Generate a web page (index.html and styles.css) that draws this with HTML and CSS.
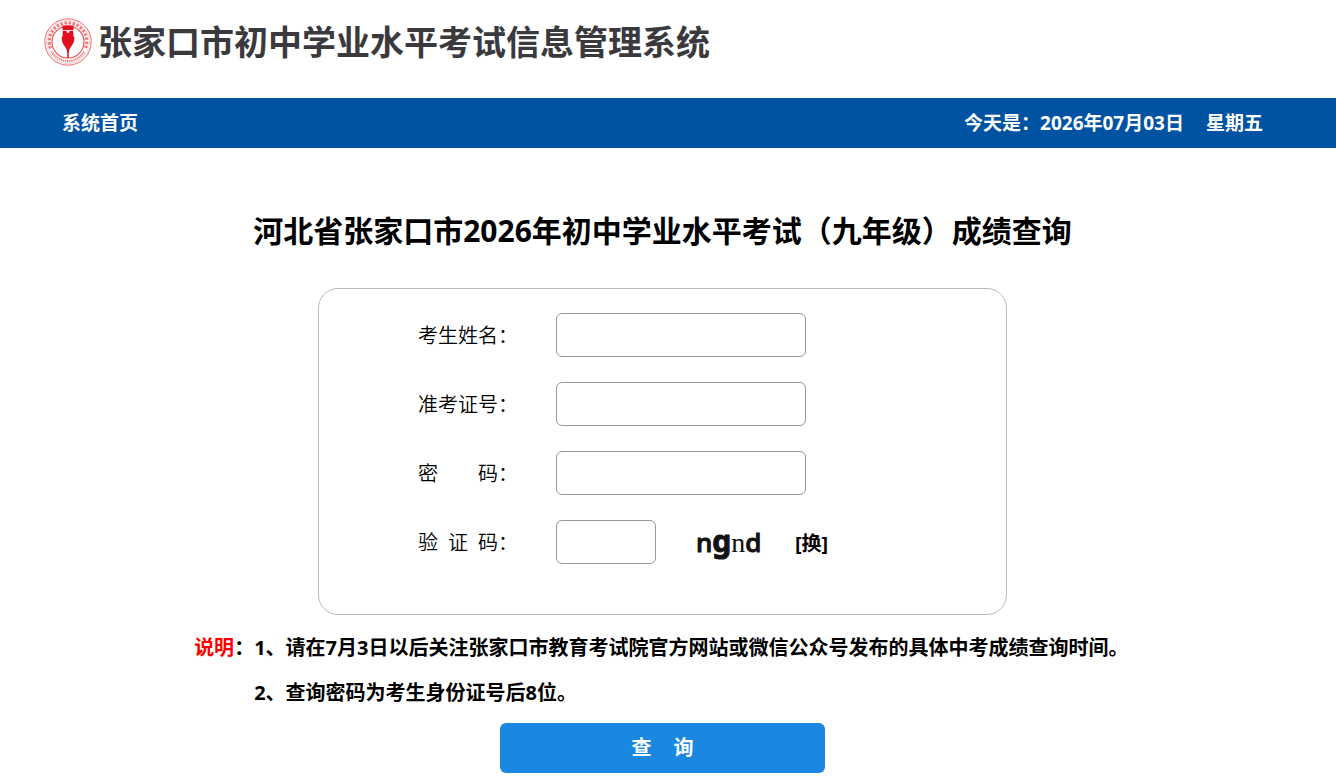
FILE: index.html
```
<!DOCTYPE html>
<html lang="zh-CN">
<head>
<meta charset="utf-8">
<meta name="viewport" content="width=device-width, initial-scale=1">
<title>张家口市初中学业水平考试信息管理系统</title>
<link rel="stylesheet" href="styles.css">
</head>
<body>
<header class="brand">
  <svg class="brand-logo" viewBox="0 0 48 48" aria-hidden="true">
    <circle cx="24" cy="24" r="23.2" fill="#fff" stroke="#f0686c" stroke-width="1"/>
    <path d="M6.500 30.500A18.800 18.800 0 1 1 41.500 30.500" fill="none" stroke="#f27e82" stroke-width="3.400" stroke-dasharray="2.600 1.500"/>
    <path d="M7.500 33.500A19 19 0 0 0 40.500 33.500" fill="none" stroke="#f38a8d" stroke-width="2.400" stroke-dasharray="1.400 .7"/>
    <circle cx="24" cy="24" r="21.500" fill="none" stroke="#f9c3c4" stroke-width=".8"/>
    <circle cx="24" cy="24" r="16" fill="#fff" stroke="#ee4a50" stroke-width="1.100"/>
    <path d="M18.500 7.500h11v4.500h-11z" fill="#e0101c"/>
    <path d="M18.800 13h10.400l.3 5 .9 1.500c0 4.500-1.400 6.500-3.400 9.300-1.300 1.800-2 3.400-2.300 5.700h-1.400c-.3-2.300-1-3.900-2.300-5.700-2-2.800-3.400-4.800-3.400-9.300l.9-1.500z" fill="#e0101c"/>
    <path d="M24 29v11" stroke="#e0101c" stroke-width="1.500"/>
    <path d="M18.800 12.400h10.400" stroke="#f7b0b2" stroke-width=".9"/>
    <circle cx="24" cy="13.500" r="1.500" fill="#fde5e5"/>
  </svg>
  <h1 class="brand-name">张家口市初中学业水平考试信息管理系统</h1>
</header>
<nav class="navbar">
  <a class="nav-link" href="#">系统首页</a>
  <p class="nav-date"><span>今天是：2026年07月03日</span><span>星期五</span></p>
</nav>
<main class="content">
  <h2 class="title">河北省张家口市2026年初中学业水平考试（九年级）成绩查询</h2>
  <form class="query">
    <div class="card">
      <div class="field">
        <label class="label" for="name">考生姓名：</label>
        <input class="input" id="name" type="text">
      </div>
      <div class="field">
        <label class="label" for="ticket">准考证号：</label>
        <input class="input" id="ticket" type="text">
      </div>
      <div class="field">
        <label class="label" for="password"><span class="spread"><span>密</span><span>码</span></span>：</label>
        <input class="input" id="password" type="password">
      </div>
      <div class="field">
        <label class="label" for="code"><span class="spread"><span>验</span><span>证</span><span>码</span></span>：</label>
        <input class="input input-short" id="code" type="text">
        <span class="captcha"><span class="captcha-sans">n</span><span class="captcha-bold">g</span><span class="captcha-serif">n</span><span class="captcha-sans">d</span></span>
        <a class="refresh" href="#">[换]</a>
      </div>
    </div>
    <div class="notes">
      <span class="notes-label"><span class="notes-head">说明</span>：</span>
      <div class="notes-list">
        <p>1、请在7月3日以后关注张家口市教育考试院官方网站或微信公众号发布的具体中考成绩查询时间。</p>
        <p>2、查询密码为考生身份证号后8位。</p>
      </div>
    </div>
    <button class="submit" type="submit"><span>查</span><span>询</span></button>
  </form>
</main>
</body>
</html>
```
FILE: styles.css
```
* {
  box-sizing: border-box;
}

body {
  margin: 0;
  background: #fff;
  color: #000;
  font-family: "Noto Sans", "Noto Sans CJK SC", sans-serif;
  font-size: 20px;
}

h1, h2, p {
  margin: 0;
}

a {
  color: inherit;
  text-decoration: none;
}

.brand {
  display: flex;
  align-items: center;
  gap: 6px;
  height: 98px;
  padding: 0 44px 14px;
}

.brand-logo {
  flex: none;
  width: 48px;
  height: 48px;
}

.brand-name {
  color: #3a393e;
  font-size: 34px;
  line-height: 48px;
  font-weight: 700;
}

.navbar {
  display: flex;
  align-items: center;
  justify-content: space-between;
  min-height: 50px;
  padding: 0 73px 0 62px;
  background: #0052a3;
  color: #fff;
  font-size: 19px;
  line-height: 28px;
  font-weight: 700;
}

.nav-date {
  display: flex;
  gap: 22px;
}

.content {
  padding: 60px 11px 0 0;
}

.title {
  font-size: 30px;
  line-height: 46px;
  font-weight: 700;
  text-align: center;
}

.query {
  display: flex;
  flex-direction: column;
  align-items: center;
  padding-top: 34px;
}

.card {
  display: flex;
  flex-direction: column;
  gap: 25px;
  width: 52%;
  min-width: 560px;
  padding: 24px 24px 50px 99px;
  border: 1px solid #bbb;
  border-radius: 20px;
}

.field {
  display: flex;
  align-items: center;
}

.label {
  display: flex;
  width: 138px;
  line-height: 28px;
  font-family: "Noto Sans CJK SC", sans-serif;
  font-weight: 350;
}

.spread {
  display: flex;
  justify-content: space-between;
  width: 80px;
}

.input {
  width: 250px;
  height: 44px;
  padding: 0 10px;
  border: 1px solid #999;
  border-radius: 6px;
  background: #fff;
  font: inherit;
}

.input-short {
  width: 100px;
}

.captcha {
  display: flex;
  align-items: baseline;
  width: 64px;
  margin: 0 35px 0 40px;
  color: #111;
  font-size: 26px;
  line-height: 40px;
}

.captcha-sans {
  font-family: "Noto Sans", sans-serif;
  font-weight: 500;
  -webkit-text-stroke: 1px #111;
}

.captcha-bold {
  font-family: "Noto Sans", sans-serif;
  font-size: 30px;
  font-weight: 700;
  -webkit-text-stroke: 1px #111;
}

.captcha-serif {
  font-family: "Liberation Serif", serif;
  font-size: 28px;
}

.refresh {
  font-weight: 700;
}

.notes {
  display: flex;
  width: 71%;
  padding: 10px 0 0 2px;
  font-weight: 700;
  line-height: 45px;
}

.notes-label {
  flex: none;
}

.notes-head {
  color: #f00;
}

.submit {
  display: flex;
  align-items: center;
  justify-content: center;
  gap: 22px;
  width: 325px;
  height: 50px;
  margin: 8px 0 5px;
  border: 0;
  border-radius: 6px;
  background: #1a88e1;
  color: #fff;
  font: inherit;
  font-weight: 700;
  line-height: 28px;
}
```
